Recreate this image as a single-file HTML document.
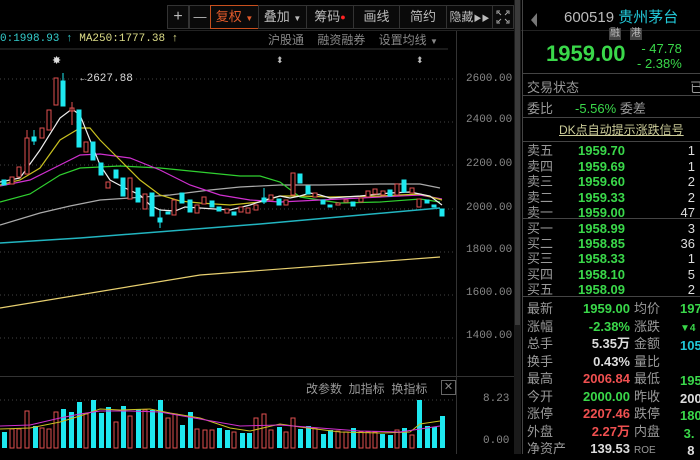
<!DOCTYPE html>
<html><head><meta charset="utf-8"><style>
body{margin:0;width:700px;height:454px;background:#000;overflow:hidden;font-family:"Liberation Sans","Noto Sans CJK SC",sans-serif;position:relative}
.a{position:absolute;white-space:nowrap}
.tb{position:absolute;top:5px;height:22px;border:1px solid #333;color:#bbb;font-size:13px;line-height:22px;text-align:center;background:#0a0a0a;white-space:nowrap;overflow:hidden}
.r{position:absolute;left:527px;font-size:13px;color:#999;white-space:nowrap}
.m{font-family:"Liberation Mono",monospace}
</style></head><body>
<!-- toolbar -->
<div class="tb" style="left:167px;width:20px;font-size:16px">+</div>
<div class="tb" style="left:189px;width:20px">—</div>
<div class="tb" style="left:210px;width:47px;border-color:#c8501e;color:#e05a2a">复权 <span style="font-size:8px">▼</span></div>
<div class="tb" style="left:258px;width:47px">叠加 <span style="font-size:8px">▼</span></div>
<div class="tb" style="left:306px;width:46px">筹码<span style="color:#f22;font-size:9px;vertical-align:top">●</span></div>
<div class="tb" style="left:353px;width:45px">画线</div>
<div class="tb" style="left:399px;width:46px">简约</div>
<div class="tb" style="left:446px;width:45px;font-size:12px">隐藏<span style="font-size:8px">▶▶</span></div>
<div class="tb" style="left:492px;width:20px"><svg width="20" height="22" style="display:block"><g stroke="#aaa" fill="none"><path d="M4 8V5h3M13 5h3v3M4 14v3h3M13 17h3v-3M5 6l3 3M15 6l-3 3M5 16l3-3M15 16l-3-3"/></g></svg></div>
<div class="a m" style="left:0;top:33px;font-size:11px;color:#3cc"><span>0:1998.93 ↑</span> <span style="color:#dd8">MA250:1777.38 ↑</span></div>
<div class="a" style="left:268px;top:31px;font-size:12px;color:#888">沪股通&nbsp;&nbsp;&nbsp;&nbsp;融资融券&nbsp;&nbsp;&nbsp;&nbsp;设置均线 <span style="font-size:8px">▼</span></div>
<div class="a m" style="left:80px;top:73px;font-size:11px;color:#ddd">←2627.88</div>
<!-- y labels -->
<div class="a m" style="left:466px;top:72px;font-size:11px;color:#888;line-height:14px">2600.00</div>
<div class="a m" style="left:466px;top:114px;font-size:11px;color:#888">2400.00</div>
<div class="a m" style="left:466px;top:158px;font-size:11px;color:#888">2200.00</div>
<div class="a m" style="left:466px;top:202px;font-size:11px;color:#888">2000.00</div>
<div class="a m" style="left:466px;top:244px;font-size:11px;color:#888">1800.00</div>
<div class="a m" style="left:466px;top:287px;font-size:11px;color:#888">1600.00</div>
<div class="a m" style="left:466px;top:330px;font-size:11px;color:#888">1400.00</div>
<div class="a m" style="left:483px;top:393px;font-size:11px;color:#888">8.23</div>
<div class="a m" style="left:483px;top:435px;font-size:11px;color:#888">0.00</div>
<div class="a" style="left:306px;top:380px;font-size:12px;color:#999">改参数&nbsp;&nbsp;加指标&nbsp;&nbsp;换指标</div>
<div class="a" style="left:441px;top:380px;width:13px;height:13px;border:1px solid #666;color:#888;font-size:11px;line-height:13px;text-align:center">✕</div>
<svg class="a" style="left:0;top:0" width="700" height="454">
<g stroke="#444" stroke-dasharray="1,3"><line x1="0" y1="79" x2="456" y2="79"/><line x1="0" y1="122" x2="456" y2="122"/><line x1="0" y1="165" x2="456" y2="165"/><line x1="0" y1="209" x2="456" y2="209"/><line x1="0" y1="252" x2="456" y2="252"/><line x1="0" y1="295" x2="456" y2="295"/><line x1="0" y1="338" x2="456" y2="338"/><line x1="0" y1="400" x2="456" y2="400"/></g>
<line x1="0" y1="49" x2="448" y2="49" stroke="#333"/>
<line x1="456.5" y1="30" x2="456.5" y2="454" stroke="#333"/>
<line x1="0" y1="376.5" x2="515" y2="376.5" stroke="#333"/>
<line x1="0" y1="30.5" x2="700" y2="30.5" stroke="#222"/>
<rect x="514" y="0" width="7" height="454" fill="#1a1a1a"/><rect x="515" y="0" width="5" height="325" fill="#3a3a3a"/>
<line x1="522.5" y1="0" x2="522.5" y2="454" stroke="#444"/>
<text x="52" y="64" fill="#ddd" font-size="11">✸</text><text x="276" y="63" fill="#bbb" font-size="9">⬍</text><text x="416" y="63" fill="#bbb" font-size="9">⬍</text>
<g stroke-width="1.2" fill="none">
<polyline stroke="#e8d070" points="0,308 200,275 440,257"/>
<polyline stroke="#22b5c0" stroke-width="1.5" points="0,243 80,238 260,224 440,208"/>
<polyline stroke="#aaa" points="0,225 40,213 70,206 100,200 130,198 170,195 210,190 240,187 280,185 320,185 380,184 420,184 440,188"/>
<polyline stroke="#30d030" points="0,202 30,194 60,175 80,168 120,166 160,168 200,172 240,176 260,176 280,182 300,197 340,203 380,202 420,199 440,202"/>
<polyline stroke="#d030d0" points="0,186 30,180 60,165 80,155 100,154 130,158 160,170 190,185 220,195 250,200 280,202 320,200 380,197 420,195 442,199"/>
<polyline stroke="#c8c020" points="0,185 20,180 40,168 60,140 80,128 90,128 100,140 120,160 140,180 160,195 180,201 200,203 230,205 260,202 280,196 300,196 330,197 380,196 420,194 442,200"/>
<polyline stroke="#eee" points="0,182 20,178 40,150 60,118 72,109 80,115 90,140 100,165 110,180 125,188 140,195 150,205 160,210 175,211 185,207 200,208 230,210 250,205 265,200 280,196 290,198 300,196 310,193 320,195 330,198 360,196 390,193 410,192 430,196 442,205"/>
</g>
<g stroke="#e05050" fill="#000">
<rect x="10" y="177" width="4" height="7"/><rect x="17" y="167" width="4" height="10"/><rect x="25" y="138" width="4" height="36"/><rect x="40" y="128" width="4" height="10"/><rect x="47" y="110" width="4" height="20"/><rect x="54" y="78" width="4" height="27"/><rect x="70" y="108" width="4" height="3"/><rect x="84" y="142" width="4" height="10"/><rect x="106" y="182" width="4" height="6"/><rect x="128" y="178" width="4" height="21"/><rect x="143" y="194" width="4" height="15"/><rect x="172" y="200" width="4" height="15"/><rect x="195" y="205" width="4" height="8"/><rect x="202" y="197" width="4" height="7"/><rect x="225" y="209" width="4" height="4"/><rect x="239" y="207" width="4" height="5"/><rect x="246" y="208" width="4" height="5"/><rect x="254" y="205" width="4" height="5"/><rect x="269" y="195" width="4" height="5"/><rect x="284" y="200" width="4" height="5"/><rect x="291" y="173" width="4" height="22"/><rect x="313" y="193" width="4" height="4"/><rect x="336" y="203" width="4" height="2"/><rect x="344" y="200" width="4" height="2"/><rect x="359" y="198" width="4" height="4"/><rect x="366" y="191" width="4" height="6"/><rect x="373" y="189" width="4" height="5"/><rect x="381" y="191" width="4" height="4"/><rect x="395" y="184" width="4" height="11"/><rect x="410" y="188" width="4" height="5"/><rect x="417" y="199" width="4" height="8"/>
<line x1="72" y1="102" x2="72" y2="125"/><line x1="27" y1="130" x2="27" y2="138"/>
</g>
<g fill="#1ee8f0" stroke="#1ee8f0">
<rect x="2" y="180" width="4" height="5"/><rect x="32" y="137" width="4" height="4"/><line x1="34" y1="130" x2="34" y2="145"/><rect x="61" y="81" width="4" height="25"/><line x1="63" y1="73" x2="63" y2="81"/><rect x="77" y="110" width="4" height="37"/><rect x="91" y="142" width="4" height="18"/><rect x="99" y="163" width="4" height="12"/><rect x="114" y="170" width="4" height="8"/><rect x="121" y="178" width="4" height="18"/><rect x="136" y="188" width="4" height="14"/><rect x="150" y="193" width="4" height="23"/><rect x="158" y="218" width="4" height="4"/><line x1="160" y1="210" x2="160" y2="228"/><rect x="166" y="212" width="4" height="2"/><rect x="180" y="193" width="4" height="10"/><rect x="188" y="200" width="4" height="12"/><rect x="210" y="201" width="4" height="6"/><rect x="217" y="207" width="4" height="4"/><rect x="232" y="212" width="4" height="3"/><rect x="262" y="198" width="4" height="4"/><line x1="264" y1="188" x2="264" y2="204"/><rect x="277" y="199" width="4" height="6"/><rect x="298" y="174" width="4" height="9"/><rect x="306" y="186" width="4" height="8"/><rect x="321" y="200" width="4" height="4"/><rect x="328" y="205" width="4" height="2"/><rect x="351" y="202" width="4" height="4"/><rect x="388" y="190" width="4" height="6"/><rect x="402" y="180" width="4" height="12"/><rect x="425" y="200" width="4" height="3"/><rect x="432" y="205" width="4" height="2"/><rect x="440" y="209" width="4" height="7"/>
</g>
<!-- volume -->
<g fill="#1ee8f0"><rect x="2" y="432" width="5" height="16"/><rect x="33" y="426" width="5" height="22"/><rect x="61" y="409" width="5" height="39"/><rect x="69" y="412" width="5" height="36"/><rect x="77" y="402" width="5" height="46"/><rect x="91" y="400" width="5" height="48"/><rect x="99" y="413" width="5" height="35"/><rect x="106" y="407" width="5" height="41"/><rect x="121" y="406" width="5" height="42"/><rect x="136" y="409" width="5" height="39"/><rect x="150" y="410" width="5" height="38"/><rect x="158" y="400" width="5" height="48"/><rect x="180" y="425" width="5" height="23"/><rect x="188" y="412" width="5" height="36"/><rect x="217" y="428" width="5" height="20"/><rect x="225" y="430" width="5" height="18"/><rect x="240" y="433" width="5" height="15"/><rect x="247" y="433" width="5" height="15"/><rect x="277" y="427" width="5" height="21"/><rect x="298" y="429" width="5" height="19"/><rect x="306" y="426" width="5" height="22"/><rect x="321" y="434" width="5" height="14"/><rect x="328" y="430" width="5" height="18"/><rect x="351" y="428" width="5" height="20"/><rect x="380" y="434" width="5" height="14"/><rect x="388" y="435" width="5" height="13"/><rect x="402" y="428" width="5" height="20"/><rect x="417" y="400" width="5" height="48"/><rect x="425" y="426" width="5" height="22"/><rect x="432" y="427" width="5" height="21"/><rect x="440" y="416" width="5" height="32"/></g>
<g fill="none" stroke="#e05050"><rect x="10" y="429" width="4" height="19"/><rect x="17" y="429" width="4" height="19"/><rect x="25" y="411" width="4" height="37"/><rect x="40" y="428" width="4" height="20"/><rect x="47" y="429" width="4" height="19"/><rect x="54" y="412" width="4" height="36"/><rect x="84" y="414" width="4" height="34"/><rect x="114" y="422" width="4" height="26"/><rect x="128" y="416" width="4" height="32"/><rect x="143" y="410" width="4" height="38"/><rect x="166" y="418" width="4" height="30"/><rect x="173" y="414" width="4" height="34"/><rect x="195" y="429" width="4" height="19"/><rect x="203" y="430" width="4" height="18"/><rect x="210" y="430" width="4" height="18"/><rect x="232" y="432" width="4" height="16"/><rect x="254" y="418" width="4" height="30"/><rect x="262" y="414" width="4" height="34"/><rect x="269" y="430" width="4" height="18"/><rect x="284" y="432" width="4" height="16"/><rect x="291" y="418" width="4" height="30"/><rect x="313" y="428" width="4" height="20"/><rect x="336" y="431" width="4" height="17"/><rect x="344" y="432" width="4" height="16"/><rect x="359" y="432" width="4" height="16"/><rect x="366" y="432" width="4" height="16"/><rect x="373" y="432" width="4" height="16"/><rect x="395" y="430" width="4" height="18"/><rect x="410" y="435" width="4" height="13"/></g>
<polyline fill="none" stroke="#c8c020" points="0,429 30,428 60,422 80,416 100,409 120,410 150,409 170,413 200,418 230,428 250,431 280,424 300,427 340,432 380,433 410,432 420,424 440,421"/>
<polyline fill="none" stroke="#d030d0" points="0,426 30,425 60,418 80,414 100,411 130,411 160,412 200,419 240,426 280,425 320,428 360,431 400,432 440,426"/>
<g stroke="#444"><line x1="523" y1="73.5" x2="700" y2="73.5"/><line x1="523" y1="95.5" x2="700" y2="95.5"/><line x1="523" y1="117.5" x2="700" y2="117.5"/><line x1="523" y1="141.5" x2="700" y2="141.5"/><line x1="523" y1="218.5" x2="700" y2="218.5"/><line x1="523" y1="296.5" x2="700" y2="296.5"/></g>
<polygon points="537,13 537,27 531,20" fill="#777"/>
</svg>
<div class="a" style="left:564px;top:6px;font-size:15px;color:#bbb">600519 <span style="color:#22c8d8">贵州茅台</span></div>
<div class="a" style="left:609px;top:28px;font-size:10px;line-height:12px;color:#bbb;background:#444;padding:0 1px">融</div>
<div class="a" style="left:630px;top:28px;font-size:10px;line-height:12px;color:#bbb;background:#444;padding:0 1px">港</div>
<div class="a" style="left:546px;top:41px;font-size:22px;font-weight:bold;color:#3ad84a">1959.00</div>
<div class="a" style="left:637px;top:41px;font-size:13px;color:#3ad84a;line-height:15px;text-align:right">- 47.78<br>- 2.38%</div>
<div class="r" style="top:77px">交易状态</div><div class="a" style="left:690px;top:77px;font-size:13px;color:#999">已</div>
<div class="r" style="top:98px">委比<span style="color:#3ad84a;margin-left:22px">-5.56%</span> 委差</div>
<div class="a" style="left:559px;top:121px;font-size:12px;color:#cc9;text-decoration:underline">DK点自动提示涨跌信号</div>
<div class="r" style="top:143px;line-height:15.5px">卖五<br>卖四<br>卖三<br>卖二<br>卖一</div>
<div class="a" style="left:578px;top:143px;font-size:13px;line-height:15.5px;color:#3ad84a;font-weight:bold">1959.70<br>1959.69<br>1959.60<br>1959.33<br>1959.00</div>
<div class="a" style="left:670px;top:143px;width:25px;text-align:right;font-size:13px;line-height:15.5px;color:#ddd">1<br>1<br>2<br>2<br>47</div>
<div class="r" style="top:221px;line-height:15.2px">买一<br>买二<br>买三<br>买四<br>买五</div>
<div class="a" style="left:578px;top:221px;font-size:13px;line-height:15.2px;color:#3ad84a;font-weight:bold">1958.99<br>1958.85<br>1958.33<br>1958.10<br>1958.09</div>
<div class="a" style="left:670px;top:221px;width:25px;text-align:right;font-size:13px;line-height:15.2px;color:#ddd">3<br>36<br>1<br>5<br>2</div>
<div class="r" style="top:300px;line-height:17.5px">最新<br>涨幅<br>总手<br>换手<br>最高<br>今开<br>涨停<br>外盘<br>净资产</div>
<div class="a" style="left:560px;top:300px;width:70px;text-align:right;font-size:13px;line-height:17.5px;font-weight:bold"><span style="color:#3ad84a">1959.00</span><br><span style="color:#3ad84a">-2.38%</span><br><span style="color:#ddd">5.35万</span><br><span style="color:#ddd">0.43%</span><br><span style="color:#f05050">2006.84</span><br><span style="color:#3ad84a">2000.00</span><br><span style="color:#f05050">2207.46</span><br><span style="color:#f05050">2.27万</span><br><span style="color:#ddd">139.53</span></div>
<div class="a" style="left:634px;top:300px;font-size:13px;line-height:17.5px;color:#999">均价<br>涨跌<br>金额<br>量比<br>最低<br>昨收<br>跌停<br>内盘<br><span style="font-size:10px">ROE</span></div>
<div class="a" style="left:680px;top:300px;font-size:13px;line-height:17.5px;font-weight:bold"><span style="color:#3ad84a">197</span><br><span style="color:#3ad84a;font-size:10px">▼4</span><br><span style="color:#22c8d8">105.</span><br>&nbsp;<br><span style="color:#3ad84a">195</span><br><span style="color:#ddd">200</span><br><span style="color:#3ad84a">180</span><br><span style="color:#3ad84a">&nbsp;3.</span><br><span style="color:#ddd">&nbsp;&nbsp;8</span></div>
</body></html>
